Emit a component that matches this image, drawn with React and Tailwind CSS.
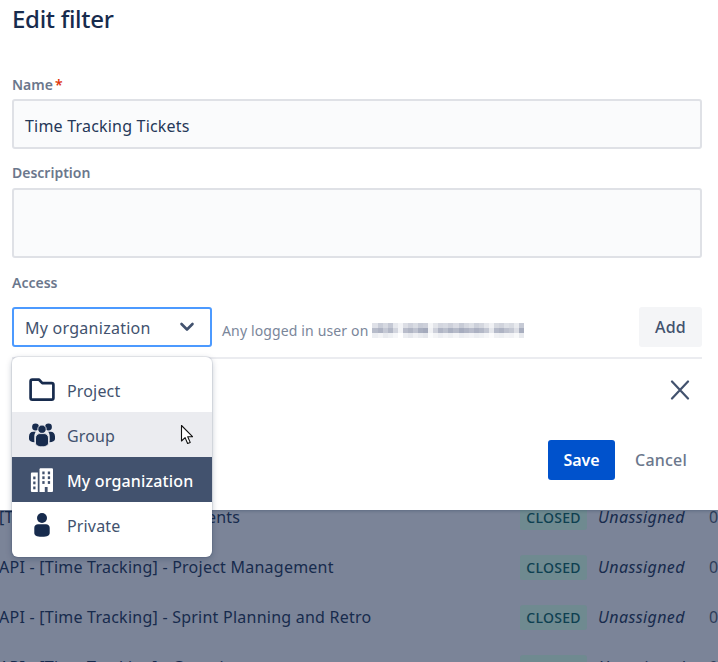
const font = { fontFamily: '"Noto Sans", sans-serif' };

const mosaicRows = [
  ["#dfe1e8","#c9cdd8","#d6d9e1","#c4c8d4","#e6e8ed","#f2f3f6","#dcdee5","#cfd2dc","#d9dce3","#c8ccd7","#cdd0da","#f4f5f7","#e3e5ea","#d3d6df","#d7dae2","#cdd0da","#d9dbe3","#c7cbd6","#d5d8e0","#dde0e6","#ccd0da","#d4d7df","#e4e6eb","#f0f1f4","#d6d9e0","#d0d3dc","#dde0e6","#d8dbe2","#e8eaee","#c6cad5"],
  ["#b7bcca","#aeb3c3","#c4c8d4","#b2b7c6","#d2d5de","#f2f3f6","#b9bdcb","#b0b5c4","#bfc3d0","#a9afc0","#a4aabc","#f0f1f4","#ced1db","#b0b5c5","#bbc0cd","#aab0c1","#b6bbc9","#a6acbe","#afb4c4","#b8bccb","#acb1c2","#b3b8c7","#c3c7d3","#e5e7ec","#b5bac9","#aeb3c3","#bdc1ce","#c4c8d3","#dcdee5","#a8aebf"],
  ["#eceef2","#f3f4f6","#e9ebef","#eef0f3","#f6f7f9","#ffffff","#eceef2","#e6e8ed","#f0f1f4","#e9ebef","#e4e6eb","#fafbfc","#f3f4f6","#eceef2","#f2f3f6","#edeff2","#f4f5f7","#ebedf1","#eff0f3","#f2f3f6","#eceef2","#eff1f4","#f5f6f8","#fbfbfc","#f0f1f4","#edeff2","#f3f4f6","#f1f2f5","#f8f9fa","#e8eaee"],
];

function Mosaic() {
  return (
    <span className="inline-flex flex-col">
      {mosaicRows.map((row, i) => (
        <span key={i} className="flex h-[5px]">
          {row.map((c, j) => (
            <span key={j} className="w-[5.07px] h-[5px]" style={{ background: c }} />
          ))}
        </span>
      ))}
    </span>
  );
}

function Field({ label, required, children }) {
  return (
    <div>
      <div className="text-[14px] leading-[20px] font-semibold text-[#6b778c]">
        {label}
        {required && <span className="text-[#de350b] ml-[2px]">*</span>}
      </div>
      {children}
    </div>
  );
}

function FolderIcon() {
  return (
    <svg width="26" height="24" viewBox="0 0 26 24" fill="none" stroke="#172b4d" strokeWidth="2.7" strokeLinejoin="round">
      <path d="M1.600 3.400c0-1 .7-1.700 1.700-1.700h6.800l3.200 3.400h9.400c1 0 1.700.7 1.700 1.700v13.100c0 1-.7 1.700-1.700 1.700H3.300c-1 0-1.700-.7-1.700-1.700z" />
    </svg>
  );
}

function GroupIcon() {
  return (
    <svg width="26" height="24" viewBox="0 0 26 24" fill="#172b4d">
      <circle cx="6.500" cy="4" r="3.400" />
      <circle cx="19.500" cy="4" r="3.400" />
      <path d="M0 13.500c0-2.800 1.900-4.700 4.200-4.700h2.600c-1 1.300-1.500 2.900-1.500 4.800v3.900c0 .7.100 1.300.3 1.800C2.300 19.100 0 17.900 0 16z" />
      <path d="M26 13.500c0-2.800-1.900-4.700-4.200-4.700h-2.600c1 1.300 1.500 2.900 1.500 4.800v3.900c0 .7-.1 1.300-.3 1.800 3.300-.2 5.600-1.400 5.600-3.300z" />
      <circle cx="13" cy="6.200" r="4.200" stroke="#ebecf0" strokeWidth="0.9" />
      <path d="M6.500 15c0-2.500 1.900-4.400 4.200-4.400h4.600c2.300 0 4.200 1.900 4.200 4.400v5c0 2.500-2.900 3.800-6.500 3.800s-6.500-1.300-6.500-3.800z" stroke="#ebecf0" strokeWidth="0.9" />
    </svg>
  );
}

function BuildingIcon() {
  return (
    <svg width="24" height="24" viewBox="0 0 24 24">
      <path d="M9.500 1.500c0-.8.5-1.300 1.300-1.300h10.900c.8 0 1.300.5 1.300 1.300v21.200c0 .8-.5 1.300-1.300 1.300H9.500z" fill="#ffffff" />
      <path d="M7.800 4.500H2.200c-.8 0-1.300.5-1.300 1.300v16.900c0 .8.500 1.300 1.300 1.300h5.600z" fill="#ffffff" />
      <g fill="#42526e">
        <rect x="12.300" y="3.500" width="2.300" height="2.800" /><rect x="17.800" y="3.500" width="2.300" height="2.800" />
        <rect x="12.300" y="8.300" width="2.300" height="2.800" /><rect x="17.800" y="8.300" width="2.300" height="2.800" />
        <rect x="12.300" y="13.100" width="2.300" height="2.800" /><rect x="17.800" y="13.100" width="2.300" height="2.800" />
        <rect x="14.800" y="19" width="2.800" height="5" />
        <rect x="3.200" y="8.500" width="2.300" height="2.800" />
        <rect x="3.200" y="13.500" width="2.300" height="2.800" />
        <rect x="3.200" y="18.500" width="2.300" height="2.800" />
      </g>
    </svg>
  );
}

function PersonIcon() {
  return (
    <svg width="26" height="24" viewBox="0 0 26 24" fill="#172b4d">
      <circle cx="13" cy="5" r="5" />
      <path d="M5.300 14.800c0-2 1.700-3.500 3.700-3.500h8c2 0 3.700 1.500 3.700 3.500v5.200c0 2.400-2 3.800-7.700 3.800s-7.700-1.400-7.700-3.800z" />
    </svg>
  );
}

function MenuItem({ icon, label, className }) {
  return (
    <div className={`h-[45px] flex items-center pl-[17px] text-[16px] tracking-[0.15px] ${className}`}>
      <span className="w-[26px] h-[24px] flex items-center justify-center mr-[12px]">{icon}</span>
      <span className="pt-[3px]">{label}</span>
    </div>
  );
}

function BgRow({ name }) {
  return (
    <div className="h-[50px] flex items-center text-[16px] tracking-[0.24px] text-[#172b4d] whitespace-nowrap">
      <div className="w-[520px] shrink-0">{name}</div>
      <div className="w-[67px] h-[25px] flex items-center justify-center rounded-[3px] bg-[#6f8a90] text-[#0e4050] text-[14px] font-medium tracking-[0.3px] shrink-0">CLOSED</div>
      <div className="ml-[11px] w-[111px] italic tracking-[0.4px] shrink-0">Unassigned</div>
      <div className="text-[#2f3d5a]">0</div>
    </div>
  );
}

export default function App() {
  return (
    <div className="relative w-[718px] h-[662px] overflow-hidden bg-[#7b8498]" style={font}>
      <div className="relative z-10 h-[510px] bg-white pl-3 pr-4 shadow-[0_1px_3px_rgba(9,30,66,0.25)]">
        <h1 className="text-[24px] leading-[28px] pt-[5px] h-[75px] text-[#172b4d] font-medium tracking-[-0.3px]">Edit filter</h1>
        <Field label="Name" required>
          <div className="mt-[4px] h-[50px] flex items-center pt-[4px] px-[11px] border-2 border-[#dfe1e6] bg-[#fafbfc] rounded-[3px] text-[16px] tracking-[0.2px] text-[#253858]">
            Time Tracking Tickets
          </div>
        </Field>
        <div className="mt-[14px]">
          <Field label="Description">
            <div className="mt-[5px] h-[70px] border-2 border-[#dfe1e6] bg-[#fafbfc] rounded-[3px]" />
          </Field>
        </div>
        <div className="mt-[15px]">
          <Field label="Access">
            <div className="mt-[14px] flex items-center h-[40px]">
              <div className="w-[200px] h-[40px] flex items-center justify-between pl-[11px] pr-[14px] border-2 border-[#4c9aff] rounded-[3px] text-[16px] text-[#42526e]">
                <span className="pt-[2px] tracking-[0.26px]">My organization</span>
                <svg width="18" height="18" viewBox="0 0 18 18" fill="none" stroke="#42526e" strokeWidth="2.600" strokeLinecap="round" strokeLinejoin="round">
                  <path d="M3.500 6l5.500 5.500L14.500 6" />
                </svg>
              </div>
              <div className="ml-[10px] mt-[6px] flex items-center gap-[4px] text-[14px] tracking-[0.14px] text-[#7a869a]">
                Any logged in user on <Mosaic />
              </div>
              <div className="ml-auto w-[63px] h-[40px] flex items-center justify-center bg-[#f4f5f7] rounded-[3px] text-[16px] font-medium tracking-[0.2px] text-[#42526e]">Add</div>
            </div>
          </Field>
        </div>
        <div className="mt-[10px] h-[2px] bg-[#ebecf0]" />
        <div className="flex justify-end pr-[12px] pt-[21px] h-[81px]">
          <svg width="20" height="20" viewBox="0 0 20 20" fill="none" stroke="#42526e" strokeWidth="2.200" strokeLinecap="round">
            <path d="M2 1.500l16 17M18 1.500l-16 17" />
          </svg>
        </div>
        <div className="flex items-center justify-end pr-[15px] h-[40px] text-[16px] font-semibold">
          <div className="w-[67px] h-[40px] flex items-center justify-center rounded-[3px] bg-[#0052cc] text-white">Save</div>
          <div className="ml-[20px] text-[#6b778c] font-medium tracking-[0.2px]">Cancel</div>
        </div>
      </div>

      <div className="absolute left-0 top-[492px] w-full">
        <BgRow name={<span className="-ml-[1px]">[Time Tracking] - Requirements</span>} />
        <BgRow name={<span className="-ml-[1px]">API - [Time Tracking] - Project Management</span>} />
        <BgRow name={<span className="-ml-[1px]">API - [Time Tracking] - Sprint Planning and Retro</span>} />
        <BgRow name={<span className="-ml-[1px]">API - [Time Tracking] - Generic</span>} />
      </div>

      <div className="absolute z-20 left-[12px] top-[357px] w-[200px] h-[200px] bg-white rounded-[6px] pt-[10px] shadow-[0_0_0_1px_rgba(9,30,66,0.08),0_2px_6px_rgba(9,30,66,0.25)]">
        <MenuItem icon={<FolderIcon />} label="Project" className="text-[#42526e]" />
        <MenuItem icon={<GroupIcon />} label="Group" className="bg-[#ebecf0] text-[#42526e]" />
        <MenuItem icon={<BuildingIcon />} label="My organization" className="bg-[#42526e] text-white font-medium" />
        <MenuItem icon={<PersonIcon />} label="Private" className="text-[#42526e]" />
      </div>

      <svg className="absolute z-30 left-[180px] top-[424px]" width="14" height="21" viewBox="0 0 14 21">
        <path d="M1.500 1.500v15.500l3.600-3.400 2.500 5.900 2.600-1.100-2.500-5.700h4.800z" fill="#ffffff" stroke="#111111" strokeWidth="1.100" strokeLinejoin="round" />
      </svg>
    </div>
  );
}
